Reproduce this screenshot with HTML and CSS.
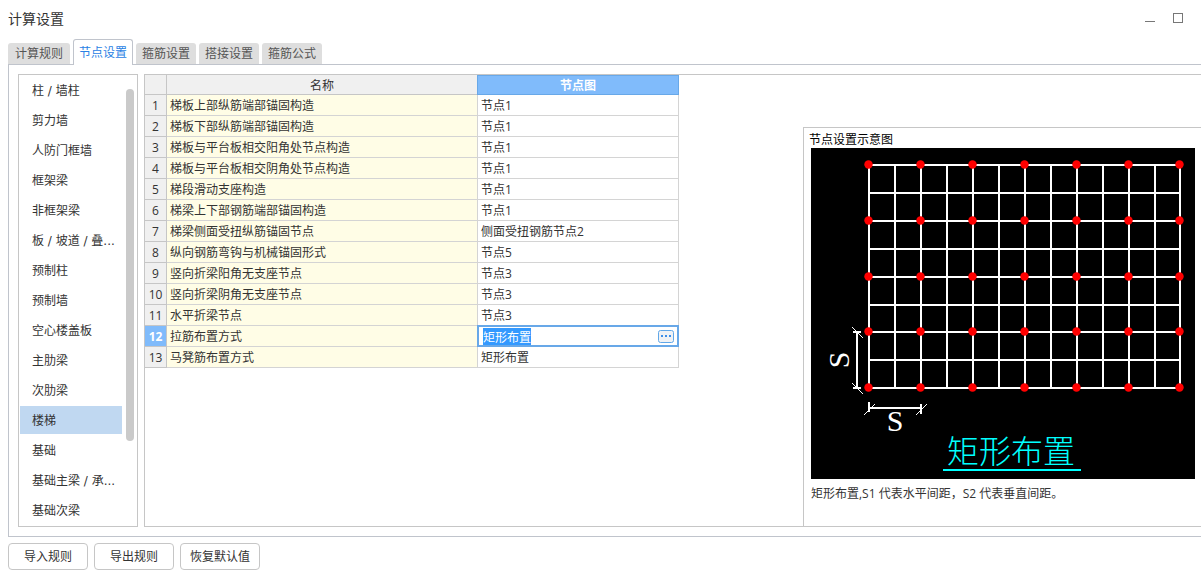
FILE: index.html
```html
<!DOCTYPE html>
<html lang="zh-CN">
<head>
<meta charset="utf-8">
<title>计算设置</title>
<link rel="stylesheet" href="styles.css">
</head>
<body>
<header class="titlebar">
  <h1 class="title">计算设置</h1>
  <div class="window-controls">
    <button class="window-btn" aria-label="最小化"><svg width="12" height="12" viewBox="0 0 12 12"><path d="M1 9.5H11" stroke="#777"/></svg></button>
    <button class="window-btn" aria-label="最大化"><svg width="12" height="12" viewBox="0 0 12 12"><rect x="1.5" y="1.5" width="9" height="9" fill="none" stroke="#777"/></svg></button>
  </div>
</header>
<div class="tabs" role="tablist">
  <button class="tab first" role="tab">计算规则</button>
  <button class="tab active" role="tab" aria-selected="true">节点设置</button>
  <button class="tab" role="tab">箍筋设置</button>
  <button class="tab" role="tab">搭接设置</button>
  <button class="tab" role="tab">箍筋公式</button>
</div>
<main class="panel">
  <nav class="category-box">
    <div class="categories">
      <button class="category">柱 / 墙柱</button>
      <button class="category">剪力墙</button>
      <button class="category">人防门框墙</button>
      <button class="category">框架梁</button>
      <button class="category">非框架梁</button>
      <button class="category">板 / 坡道 / 叠...</button>
      <button class="category">预制柱</button>
      <button class="category">预制墙</button>
      <button class="category">空心楼盖板</button>
      <button class="category">主肋梁</button>
      <button class="category">次肋梁</button>
      <button class="category selected">楼梯</button>
      <button class="category">基础</button>
      <button class="category">基础主梁 / 承...</button>
      <button class="category">基础次梁</button>
    </div>
    <div class="scroll-thumb"></div>
  </nav>
  <section class="content">
    <table class="grid">
      <colgroup><col class="col-no"><col class="col-name"><col class="col-node"></colgroup>
      <thead><tr><th></th><th>名称</th><th class="current">节点图</th></tr></thead>
      <tbody>
        <tr><th>1</th><td class="name">梯板上部纵筋端部锚固构造</td><td>节点1</td></tr>
        <tr><th>2</th><td class="name">梯板下部纵筋端部锚固构造</td><td>节点1</td></tr>
        <tr><th>3</th><td class="name">梯板与平台板相交阳角处节点构造</td><td>节点1</td></tr>
        <tr><th>4</th><td class="name">梯板与平台板相交阴角处节点构造</td><td>节点1</td></tr>
        <tr><th>5</th><td class="name">梯段滑动支座构造</td><td>节点1</td></tr>
        <tr><th>6</th><td class="name">梯梁上下部钢筋端部锚固构造</td><td>节点1</td></tr>
        <tr><th>7</th><td class="name">梯梁侧面受扭纵筋锚固节点</td><td>侧面受扭钢筋节点2</td></tr>
        <tr><th>8</th><td class="name">纵向钢筋弯钩与机械锚固形式</td><td>节点5</td></tr>
        <tr><th>9</th><td class="name">竖向折梁阳角无支座节点</td><td>节点3</td></tr>
        <tr><th>10</th><td class="name">竖向折梁阴角无支座节点</td><td>节点3</td></tr>
        <tr><th>11</th><td class="name">水平折梁节点</td><td>节点3</td></tr>
        <tr><th class="current">12</th><td class="name">拉筋布置方式</td><td class="editing">
          <div class="editor">
            <input class="editor-input" id="node" type="text" value="矩形布置" aria-label="拉筋布置方式">
            <button class="more" aria-label="选择"><svg width="16" height="13" viewBox="0 0 16 13"><rect x=".5" y=".5" width="15" height="12" rx="2" fill="#f0f2f5" stroke="#60a7e8"/><path d="M3 5h2v2H3zM7 5h2v2H7zM11 5h2v2h-2z" fill="#3d8ee8"/></svg></button>
          </div></td></tr>
        <tr><th>13</th><td class="name">马凳筋布置方式</td><td>矩形布置</td></tr>
      </tbody>
    </table>
    <aside class="preview">
      <h2 class="preview-title">节点设置示意图</h2>
      <svg class="diagram" viewBox="0 0 384 331" role="img" aria-label="矩形布置">
        <defs>
          <g id="dots" fill="#f00">
            <circle id="dot" cx="57.5" cy="16.5" r="4.2"/>
            <use href="#dot" x="52"/><use href="#dot" x="104"/><use href="#dot" x="156"/>
            <use href="#dot" x="208"/><use href="#dot" x="260"/><use href="#dot" x="311"/>
          </g>
        </defs>
        <rect width="384" height="331" fill="#000"/>
        <g fill="none" stroke="#fff" stroke-width="2">
          <path d="M58 17V240M84 17V240M110 17V240M136 17V240M162 17V240M188 17V240M214 17V240M240 17V240M266 17V240M292 17V240M318 17V240M344 17V240M369 17V240"/>
          <path d="M58 17H369M58 45H369M58 73H369M58 101H369M58 129H369M58 157H369M58 184H369M58 212H369M58 240H369"/>
          <path d="M46 184V240M42 184H50M42 240H50M58 260H110M58 254V264M110 256V266"/>
        </g>
        <path d="M41 179L52 190M41 235L52 246M53 267L64 256M105 267L116 256" stroke="#fff"/>
        <use href="#dots"/><use href="#dots" y="56"/><use href="#dots" y="112"/><use href="#dots" y="167"/><use href="#dots" y="223"/>
        <text class="dimension" x="84" y="283">S</text>
        <text class="dimension" transform="translate(38 212) rotate(-90)">S</text>
        <text class="caption" x="136" y="315">矩形布置</text>
        <path d="M132 322H270" stroke="#0ff" stroke-width="2"/>
      </svg>
      <p class="note">矩形布置,S1 代表水平间距，S2 代表垂直间距。</p>
    </aside>
  </section>
</main>
<footer class="actions">
  <button class="action">导入规则</button>
  <button class="action">导出规则</button>
  <button class="action">恢复默认值</button>
</footer>
<script src="editor.js"></script>
</body>
</html>
```
FILE: styles.css
```css
* { box-sizing: border-box; }

body {
  display: flex;
  flex-direction: column;
  min-height: 100vh;
  margin: 0;
  background: #fff;
  color: #333;
  font: 12px/20px "Open Sans", "Noto Sans CJK SC", sans-serif;
}

button, input { font: inherit; color: inherit; }

button {
  padding: 0;
  border: 0;
  background: none;
  white-space: nowrap;
}

.titlebar {
  display: flex;
  justify-content: space-between;
  height: 39px;
  padding: 9px 17px 0 8px;
}

.title { margin: 0; font-size: 14px; font-weight: 400; line-height: 20px; }

.window-controls { display: flex; gap: 16px; padding-top: 3px; }

.window-btn { width: 12px; height: 12px; }

.window-btn svg, .more svg { display: block; }

.tabs {
  display: flex;
  align-items: flex-end;
  gap: 3px;
  height: 26px;
  padding: 0 8px;
}

.tab {
  width: 60px;
  height: 21px;
  margin-bottom: 1px;
  border-radius: 3px 3px 0 0;
  background: #dedede;
  color: #555;
}

.tab.first { width: 62px; }

.tab.active {
  z-index: 1;
  height: 26px;
  margin-bottom: 0;
  border: 1px solid #c0c4cc;
  border-bottom: 0;
  background: #fff;
  color: #2a82e4;
}

.panel {
  display: flex;
  flex: 1;
  gap: 6px;
  margin: -1px 0 0 8px;
  padding: 9px 0 9px 9px;
  border: 1px solid #c0c4cc;
  border-right: 0;
}

.category-box {
  display: flex;
  flex: none;
  gap: 4px;
  width: 120px;
  padding: 1px 3px 1px 1px;
  border: 1px solid #c6c6c6;
}

.categories { display: flex; flex: none; flex-direction: column; gap: 2px; width: 102px; }

.category {
  height: 28px;
  padding: 2px 0 0 12px;
  font-family: "DejaVu Sans", "Noto Sans CJK SC", sans-serif;
  text-align: left;
}

.category.selected { background: #c0d8f1; }

.scroll-thumb {
  width: 8px;
  height: 352px;
  margin-top: 13px;
  border-radius: 4px;
  background: #cacaca;
}

.content {
  display: flex;
  flex: 1;
  justify-content: space-between;
  align-items: flex-start;
  border: 1px solid #c6c6c6;
  border-right: 0;
}

.grid { table-layout: fixed; width: 534px; border-spacing: 0; }

.col-no { width: 22px; }
.col-name { width: 311px; }
.col-node { width: 201px; }

.grid th, .grid td {
  height: 21px;
  padding: 2px 3px 0;
  border: solid #d4d4d4;
  border-width: 0 1px 1px 0;
  line-height: 18px;
  text-align: left;
  white-space: nowrap;
}

.grid th {
  padding: 2px 0 0;
  border-color: #c6c6c6;
  background: #f0f0f0;
  font-weight: 400;
  text-align: center;
}

.grid thead th { height: 20px; line-height: 17px; }

.grid .name { background: #fffde6; }

.grid th.current { background: #80bbfb; color: #fff; font-weight: 700; }

.grid thead th.current { border-color: #68a8e8; box-shadow: -1px 0 #68a8e8, inset 0 1px #68a8e8; }

.grid .editing { position: relative; padding: 0; }

.editor {
  position: absolute;
  inset: -1px;
  display: flex;
  align-items: center;
  padding: 0 3px;
  border: 2px solid #68a8e8;
  background: #fff;
}

.editor-input {
  flex: 1;
  min-width: 0;
  height: 18px;
  padding: 1px 0 0 1px;
  border: 0;
  outline: 0;
  line-height: 17px;
}

.editor-input::selection { background: #3399ff; color: #fff; }

.preview {
  flex: none;
  align-self: stretch;
  width: 398px;
  margin-top: 52px;
  padding: 3px 6px 0 7px;
  border: solid #c6c6c6;
  border-width: 1px 0 0 1px;
}

.preview-title {
  height: 17px;
  margin: 0 0 0 -2px;
  color: #000;
  font-size: 12px;
  font-weight: 400;
  line-height: 18px;
}

.diagram { display: block; width: 100%; }

.dimension { fill: #fff; font: 30px "Liberation Serif", serif; text-anchor: middle; }

.caption { fill: #0ff; font: 300 32px "Noto Sans CJK SC", sans-serif; }

.note { margin: 5px 0 0; }

.actions { display: flex; gap: 6px; padding: 6px 8px 9px; }

.action {
  width: 80px;
  height: 27px;
  border: 1px solid #c6c6c6;
  border-radius: 4px;
  background: #fff;
}
```
FILE: editor.js
```js
const nodeInput = document.getElementById("node");
nodeInput.focus();
nodeInput.select();
```
